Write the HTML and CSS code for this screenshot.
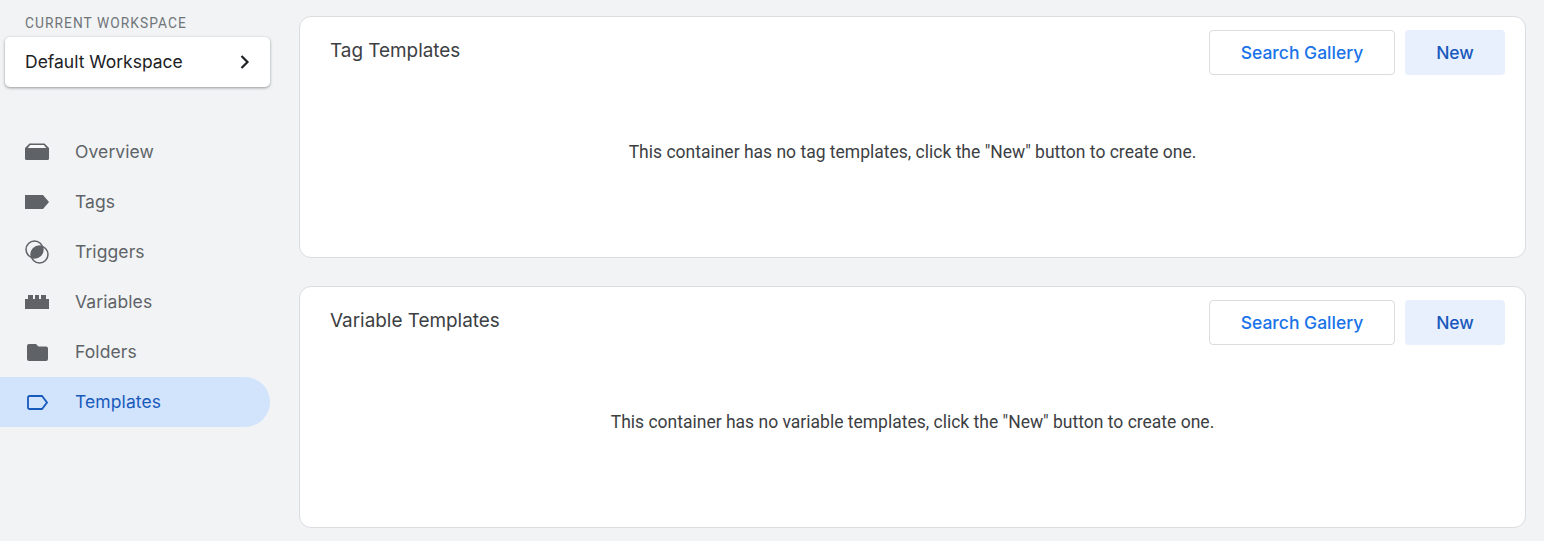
FILE: index.html
```html
<!DOCTYPE html>
<html lang="en">
<head>
  <meta charset="UTF-8">
  <title>Templates</title>
  <link rel="stylesheet" href="styles.css">
</head>
<body>
  <aside class="sidebar">
    <div class="workspace-label">CURRENT WORKSPACE</div>
    <div class="workspace-card">
      <span class="nudge">Default Workspace</span>
      <svg class="chevron" width="12" height="16" viewBox="0 0 12 16"><path d="M2.500 2l6 6-6 6" fill="none" stroke="#202124" stroke-width="2.200"/></svg>
    </div>
    <nav class="nav">
      <a class="nav-item">
        <svg class="nav-icon" width="24" height="24" viewBox="0 0 24 24"><path d="M4.500 3.500h15L24 8v10.500a1.500 1.500 0 0 1-1.500 1.500h-21A1.500 1.500 0 0 1 0 18.500V8z" fill="#5f6368"/><path d="M5.200 5h13.600l2.500 3H2.700z" fill="#f8f9fa"/></svg>
        <span class="nudge">Overview</span>
      </a>
      <a class="nav-item">
        <svg class="nav-icon" width="24" height="24" viewBox="0 0 24 24"><path d="M0 5h18l6 7-6 7H0z" fill="#5f6368"/></svg>
        <span class="nudge">Tags</span>
      </a>
      <a class="nav-item">
        <svg class="nav-icon" width="24" height="24" viewBox="0 0 24 24"><circle cx="9.500" cy="9.500" r="8.500" fill="none" stroke="#5f6368" stroke-width="1.500"/><circle cx="14.500" cy="14.500" r="8.500" fill="none" stroke="#5f6368" stroke-width="1.500"/><path d="M17.470 6.530A8.500 8.500 0 0 0 6.530 17.470 8.500 8.500 0 0 0 17.470 6.530z" fill="#5f6368"/></svg>
        <span class="nudge">Triggers</span>
      </a>
      <a class="nav-item">
        <svg class="nav-icon" width="24" height="24" viewBox="0 0 24 24"><path d="M0 9h3V5h5v4h2V5h4v4h2V5h5v4h3v10H0z" fill="#5f6368"/></svg>
        <span class="nudge">Variables</span>
      </a>
      <a class="nav-item">
        <svg class="nav-icon" width="24" height="24" viewBox="0 0 24 24"><path d="M4 4h7l2.500 2.500H21a2 2 0 0 1 2 2V19a2 2 0 0 1-2 2H4a2 2 0 0 1-2-2V6a2 2 0 0 1 2-2z" fill="#5f6368"/></svg>
        <span class="nudge">Folders</span>
      </a>
      <a class="nav-item active">
        <svg class="nav-icon" width="24" height="24" viewBox="0 0 24 24"><path d="M4.500 6h12.500l5 6.500-5 6.500H4.500A1.500 1.500 0 0 1 3 17.500v-10A1.500 1.500 0 0 1 4.500 6z" fill="none" stroke="#185abc" stroke-width="1.800"/></svg>
        <span class="nudge">Templates</span>
      </a>
    </nav>
  </aside>

  <main class="content">
    <section class="card">
      <div class="card-head">
        <h2 class="card-title">Tag Templates</h2>
        <div class="card-actions">
          <button class="btn btn-outline">Search Gallery</button>
          <button class="btn btn-tonal">New</button>
        </div>
      </div>
      <p class="empty">This container has no tag templates, click the "New" button to create one.</p>
    </section>
    <section class="card">
      <div class="card-head">
        <h2 class="card-title">Variable Templates</h2>
        <div class="card-actions">
          <button class="btn btn-outline">Search Gallery</button>
          <button class="btn btn-tonal">New</button>
        </div>
      </div>
      <p class="empty">This container has no variable templates, click the "New" button to create one.</p>
    </section>
  </main>
</body>
</html>
```

FILE: styles.css
```css
body {
  margin: 0;
  height: 541px;
  overflow: hidden;
  display: flex;
  background-color: #f1f3f4;
  font-family: Roboto, Arial, sans-serif;
  color: #3c4043;
}
.sidebar {
  width: 270px;
  flex-shrink: 0;
}
.workspace-label {
  height: 37px;
  box-sizing: border-box;
  padding: 16px 0 0 25px;
  font-size: 13.750px;
  line-height: 15px;
  letter-spacing: 1.050px;
  color: #70757a;
}
.workspace-card {
  margin-left: 5px;
  height: 50px;
  padding: 0 19px 0 20px;
  display: flex;
  align-items: center;
  justify-content: space-between;
  background-color: #fff;
  border-radius: 5px;
  box-shadow: 0 1px 3px rgba(60, 64, 67, 0.5);
  font-family: Inter, Arial, sans-serif;
  font-size: 17.500px;
  color: #202124;
}
.nudge {
  padding-bottom: 2px;
}
.nav {
  margin-top: 40px;
}
.nav-item {
  height: 50px;
  padding-left: 25px;
  display: flex;
  align-items: center;
  gap: 26px;
  font-family: Inter, Arial, sans-serif;
  font-size: 17.500px;
  letter-spacing: 0.100px;
  color: #5f6368;
  border-radius: 0 25px 25px 0;
}
.nav-item.active {
  background-color: #d2e3fc;
  color: #185abc;
}
.nav-icon {
  flex-shrink: 0;
}
.content {
  width: 1227px;
  margin: 16px 0 0 29px;
  display: flex;
  flex-direction: column;
  gap: 28px;
}
.card {
  height: 242px;
  box-sizing: border-box;
  background-color: #fff;
  border: 1px solid #dadce0;
  border-radius: 12px;
  padding: 13px 20px 0;
}
.card-head {
  display: flex;
  justify-content: space-between;
  align-items: flex-start;
}
.card-title {
  margin: 7px 0 0 10px;
  font-family: Inter, Arial, sans-serif;
  font-size: 18.900px;
  line-height: 28px;
  font-weight: 400;
  color: #3c4043;
}
.card-actions {
  display: flex;
  gap: 10px;
}
.btn {
  height: 45px;
  border-radius: 4px;
  font-family: Inter, Arial, sans-serif;
  font-size: 17.500px;
  font-weight: 500;
  cursor: pointer;
}
.btn-outline {
  width: 186px;
  background-color: #fff;
  border: 1px solid #dadce0;
  color: #1a73e8;
}
.btn-tonal {
  width: 100px;
  background-color: #e8f0fe;
  border: none;
  color: #185abc;
}
.empty {
  margin: 65px 0 0;
  text-align: center;
  font-size: 17.500px;
  line-height: 24px;
  color: #3c4043;
}
```
